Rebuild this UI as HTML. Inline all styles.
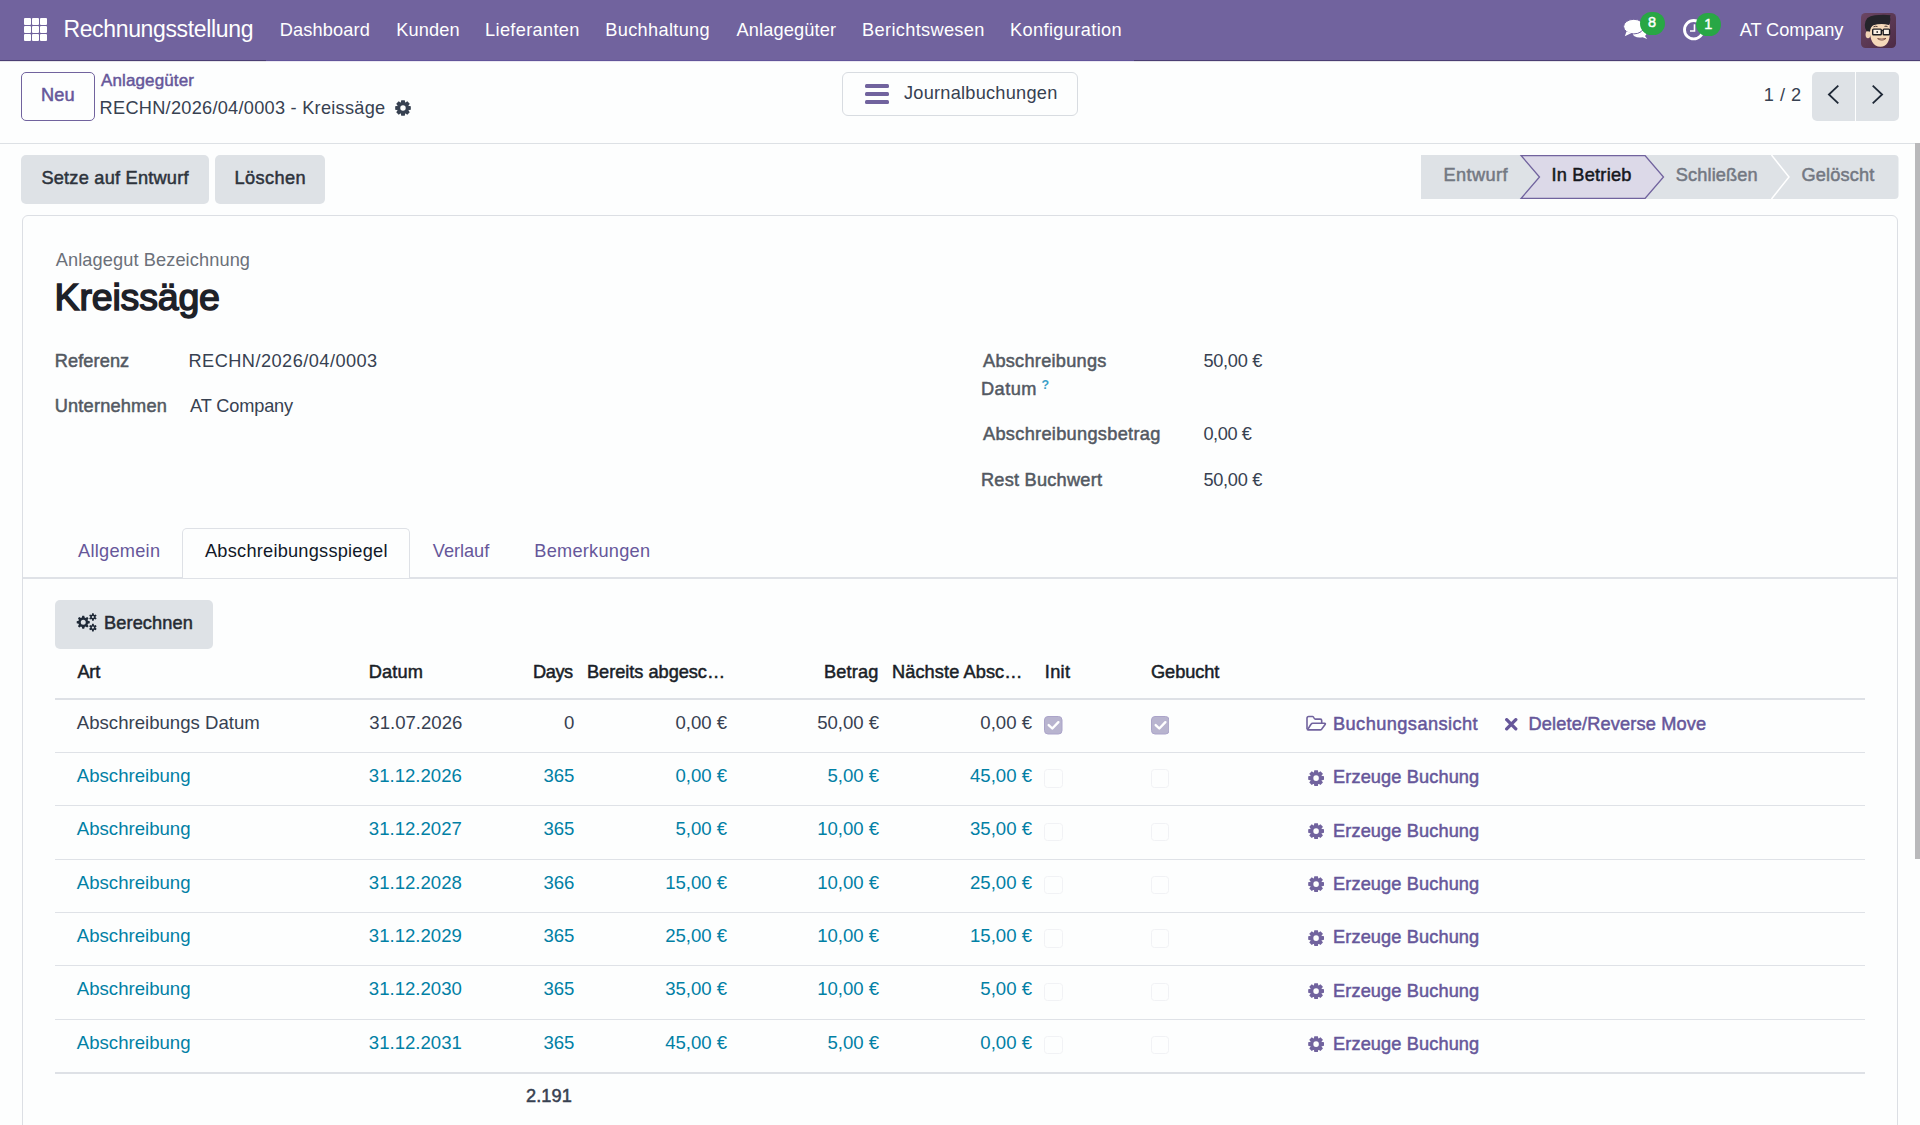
<!DOCTYPE html>
<html><head><meta charset="utf-8"><style>
html,body{margin:0;padding:0;width:1920px;height:1125px;overflow:hidden;background:#fdfefe;}
body{position:relative;font-family:"Liberation Sans", sans-serif;}
.t{position:absolute;white-space:nowrap;font-family:"Liberation Sans", sans-serif;}
.r{position:absolute;}
</style></head><body>
<div class="r" style="left:0px;top:0px;width:1920px;height:60px;background:#71639e;"></div>
<div class="r" style="left:0px;top:60px;width:1920px;height:1px;background:#4b3f73;"></div>
<div class="r" style="left:266px;top:60px;width:868px;height:1px;background:#62559a;"></div>
<div class="r" style="left:0px;top:61px;width:1920px;height:1px;background:#e6e5ea;"></div>
<div class="r" style="left:266px;top:61px;width:868px;height:1px;background:#ebe8f2;"></div>
<div class="r" style="left:24.0px;top:18.0px;width:6.6px;height:6.6px;background:#fff;border-radius:1px;"></div>
<div class="r" style="left:32.2px;top:18.0px;width:6.6px;height:6.6px;background:#fff;border-radius:1px;"></div>
<div class="r" style="left:40.4px;top:18.0px;width:6.6px;height:6.6px;background:#fff;border-radius:1px;"></div>
<div class="r" style="left:24.0px;top:26.2px;width:6.6px;height:6.6px;background:#fff;border-radius:1px;"></div>
<div class="r" style="left:32.2px;top:26.2px;width:6.6px;height:6.6px;background:#fff;border-radius:1px;"></div>
<div class="r" style="left:40.4px;top:26.2px;width:6.6px;height:6.6px;background:#fff;border-radius:1px;"></div>
<div class="r" style="left:24.0px;top:34.4px;width:6.6px;height:6.6px;background:#fff;border-radius:1px;"></div>
<div class="r" style="left:32.2px;top:34.4px;width:6.6px;height:6.6px;background:#fff;border-radius:1px;"></div>
<div class="r" style="left:40.4px;top:34.4px;width:6.6px;height:6.6px;background:#fff;border-radius:1px;"></div>
<div id="T1" class="t" style="left:63.40px;top:17.63px;font-size:23.0px;line-height:23.0px;font-weight:400;color:#fff;letter-spacing:-0.349px;">Rechnungsstellung</div>
<div id="T2" class="t" style="left:279.80px;top:20.79px;font-size:18.2px;line-height:18.2px;font-weight:400;color:#fff;letter-spacing:0.135px;">Dashboard</div>
<div id="T3" class="t" style="left:396.20px;top:20.79px;font-size:18.2px;line-height:18.2px;font-weight:400;color:#fff;letter-spacing:0.144px;">Kunden</div>
<div id="T4" class="t" style="left:485.10px;top:20.79px;font-size:18.2px;line-height:18.2px;font-weight:400;color:#fff;letter-spacing:0.324px;">Lieferanten</div>
<div id="T5" class="t" style="left:605.30px;top:20.79px;font-size:18.2px;line-height:18.2px;font-weight:400;color:#fff;letter-spacing:0.324px;">Buchhaltung</div>
<div id="T6" class="t" style="left:736.50px;top:20.79px;font-size:18.2px;line-height:18.2px;font-weight:400;color:#fff;letter-spacing:0.144px;">Anlagegüter</div>
<div id="T7" class="t" style="left:862.10px;top:20.79px;font-size:18.2px;line-height:18.2px;font-weight:400;color:#fff;letter-spacing:0.330px;">Berichtswesen</div>
<div id="T8" class="t" style="left:1010.00px;top:20.79px;font-size:18.2px;line-height:18.2px;font-weight:400;color:#fff;letter-spacing:0.375px;">Konfiguration</div>
<svg class="r" style="left:1623px;top:18px" width="26" height="22" viewBox="0 0 26 22"><path d="M9.5 14.5 Q10 12.5 14 12.5 Q21 12 23 14.5 Q24 16.5 22 18 L24.2 21 L19.5 19.2 Q15 20.3 11.5 18.3 Q9.5 17 9.5 14.5Z" fill="#fff"/><ellipse cx="10.8" cy="8.6" rx="10.2" ry="7.3" fill="#fff" stroke="#71639e" stroke-width="1"/><path d="M3.5 13.5 L1.8 18.2 L8.5 15 Z" fill="#fff"/></svg>
<div class="r" style="left:1639.5px;top:12px;width:25px;height:23px;border-radius:12px;background:#28a745;"></div>
<div class="t" style="left:1639.5px;width:25px;text-align:center;top:15.13px;font-size:14.5px;line-height:14.5px;font-weight:400;-webkit-text-stroke:0.45px #fff;color:#fff">8</div>
<svg class="r" style="left:1682px;top:18px" width="24" height="24" viewBox="0 0 24 24"><circle cx="11.7" cy="11.7" r="9.2" fill="none" stroke="#fff" stroke-width="2.9"/><path d="M12.5 6.3 V13 H8" fill="none" stroke="#fff" stroke-width="1.6"/></svg>
<div class="r" style="left:1695.5px;top:13px;width:25.5px;height:22.5px;border-radius:12px;background:#28a745;"></div>
<div class="t" style="left:1695.5px;width:25.5px;text-align:center;top:16.63px;font-size:14.5px;line-height:14.5px;font-weight:400;-webkit-text-stroke:0.45px #fff;color:#fff">1</div>
<div id="T9" class="t" style="left:1739.80px;top:21.29px;font-size:18.2px;line-height:18.2px;font-weight:400;color:#fff;letter-spacing:-0.100px;">AT Company</div>
<svg class="r" style="left:1861px;top:13px" width="35" height="35" viewBox="0 0 35 35">
<defs><linearGradient id="ag" x1="0" y1="0" x2="1" y2="1"><stop offset="0" stop-color="#6b4663"/><stop offset="1" stop-color="#4c2b45"/></linearGradient></defs>
<rect width="35" height="35" rx="4.5" fill="url(#ag)"/>
<ellipse cx="7" cy="21.5" rx="2.4" ry="3.8" fill="#f1d3b5"/>
<path d="M8.6 13 Q8.2 33.8 19.5 33.8 Q28.9 33.2 28.9 19 L28.7 11.5 Q20 9 8.6 12 Z" fill="#f5d9ba"/>
<path d="M3.8 12 Q4 3 14 2.2 Q24 1.5 29.6 2.3 Q28.6 4 29.4 6.2 Q29.2 10 27.8 12 Q20 10 12.3 12.3 Q9.6 13.8 9 18.5 L5.6 18.2 Q3.6 15.5 3.8 12 Z" fill="#24242a"/>
<path d="M12.5 13.8 Q14.5 12.8 16.5 13.6 M23.5 13.4 Q25 12.8 26.5 13.6" stroke="#3a2a2a" stroke-width="0.9" fill="none"/>
<rect x="11.7" y="16.1" width="8.6" height="5.6" rx="0.8" fill="#fbf1e6" stroke="#1e1e22" stroke-width="1.4"/>
<rect x="22.2" y="16.1" width="6.4" height="5.6" rx="0.8" fill="#fbf1e6" stroke="#1e1e22" stroke-width="1.4"/>
<path d="M20.3 17.6 H22.2" stroke="#1e1e22" stroke-width="1.2"/>
<circle cx="16.2" cy="19" r="0.9" fill="#333"/>
<path d="M16.6 25.6 Q21 28.8 25 25.4 Q21 26.6 16.6 25.6Z" fill="#fff" stroke="#6b3a2e" stroke-width="0.8"/>
</svg>
<div class="r" style="left:0px;top:62px;width:1920px;height:81px;background:#fdfefe;"></div>
<div class="r" style="left:0px;top:143px;width:1920px;height:1px;background:#dde1e5;"></div>
<div class="r" style="left:21px;top:72px;width:74px;height:49px;border:1.3px solid #71639e;border-radius:5px;box-sizing:border-box;background:#fdfefe;"></div>
<div id="T10" class="t" style="left:41.00px;top:85.84px;font-size:18.2px;line-height:18.2px;font-weight:400;color:#66579a;-webkit-text-stroke:0.50px #66579a;letter-spacing:0.180px;">Neu</div>
<div id="T11" class="t" style="left:101.10px;top:72.41px;font-size:17.0px;line-height:17.0px;font-weight:400;color:#66579a;-webkit-text-stroke:0.47px #66579a;letter-spacing:0.108px;">Anlagegüter</div>
<div id="T12" class="t" style="left:99.60px;top:99.39px;font-size:18.2px;line-height:18.2px;font-weight:400;color:#374151;letter-spacing:0.261px;">RECHN/2026/04/0003 - Kreissäge</div>
<svg class="r" style="left:395px;top:100px" width="16" height="16" viewBox="0 0 16 16"><path fill="#374151" fill-rule="evenodd" d="M5.68 3.08 L6.25 0.19 L9.75 0.19 L10.32 3.08 L9.84 2.88 L12.29 1.24 L14.76 3.71 L13.12 6.16 L12.92 5.68 L15.81 6.25 L15.81 9.75 L12.92 10.32 L13.12 9.84 L14.76 12.29 L12.29 14.76 L9.84 13.12 L10.32 12.92 L9.75 15.81 L6.25 15.81 L5.68 12.92 L6.16 13.12 L3.71 14.76 L1.24 12.29 L2.88 9.84 L3.08 10.32 L0.19 9.75 L0.19 6.25 L3.08 5.68 L2.88 6.16 L1.24 3.71 L3.71 1.24 L6.16 2.88 Z M10.72 8.00 A2.72 2.72 0 1 0 5.28 8.00 A2.72 2.72 0 1 0 10.72 8.00 Z"/></svg>
<div class="r" style="left:842px;top:72px;width:236px;height:43.5px;border:1px solid #d8dce1;border-radius:6px;box-sizing:border-box;background:#fdfefe;"></div>
<div class="r" style="left:865px;top:84px;width:24px;height:3.8px;background:#71639e;border-radius:1.5px;"></div>
<div class="r" style="left:865px;top:92px;width:24px;height:3.8px;background:#71639e;border-radius:1.5px;"></div>
<div class="r" style="left:865px;top:100px;width:24px;height:3.8px;background:#71639e;border-radius:1.5px;"></div>
<div id="T13" class="t" style="left:904.00px;top:84.49px;font-size:18.2px;line-height:18.2px;font-weight:400;color:#374151;letter-spacing:0.240px;">Journalbuchungen</div>
<div id="T14" class="t" style="left:1763.70px;top:85.84px;font-size:18.2px;line-height:18.2px;font-weight:400;color:#374151;letter-spacing:0.540px;">1 / 2</div>
<div class="r" style="left:1812px;top:72px;width:42.6px;height:49px;background:#dee2e6;border-radius:5px 0 0 5px;"></div>
<div class="r" style="left:1856px;top:72px;width:42.8px;height:49px;background:#dee2e6;border-radius:0 5px 5px 0;"></div>
<svg class="r" style="left:1826px;top:84px" width="15" height="21" viewBox="0 0 15 21"><path d="M12.3 1.6 L2.9 10.5 L12.3 19.4" fill="none" stroke="#1f2937" stroke-width="1.8"/></svg>
<svg class="r" style="left:1870px;top:84px" width="15" height="21" viewBox="0 0 15 21"><path d="M2.7 1.6 L12.1 10.5 L2.7 19.4" fill="none" stroke="#1f2937" stroke-width="1.8"/></svg>
<div class="r" style="left:21.3px;top:155px;width:187.5px;height:48.7px;background:#dee2e6;border-radius:5px;"></div>
<div id="T15" class="t" style="left:41.40px;top:168.79px;font-size:18.2px;line-height:18.2px;font-weight:400;color:#2d333c;-webkit-text-stroke:0.50px #2d333c;letter-spacing:0.225px;">Setze auf Entwurf</div>
<div class="r" style="left:215px;top:155px;width:109.7px;height:48.7px;background:#dee2e6;border-radius:5px;"></div>
<div id="T16" class="t" style="left:234.60px;top:168.79px;font-size:18.2px;line-height:18.2px;font-weight:400;color:#2d333c;-webkit-text-stroke:0.50px #2d333c;letter-spacing:0.360px;">Löschen</div>
<svg class="r" style="left:1421px;top:155px" width="478" height="44" viewBox="0 0 478 44">
<path d="M0 0 H473.5 Q477.5 0 477.5 4 V40 Q477.5 44 473.5 44 H0 Z" fill="#dee2e6"/>
<path d="M100 0.5 H224 L242.5 22 L224 43.5 H100 L118.5 22 Z" fill="#dcd9e8" stroke="#71639e" stroke-width="1.3"/>
<path d="M350.5 0 L368 22 L350.5 44" fill="none" stroke="#fff" stroke-width="1.5"/>
</svg>
<div id="T17" class="t" style="left:1443.50px;top:165.89px;font-size:18.2px;line-height:18.2px;font-weight:400;color:#737882;-webkit-text-stroke:0.50px #737882;letter-spacing:0.390px;">Entwurf</div>
<div id="T18" class="t" style="left:1551.40px;top:165.89px;font-size:18.2px;line-height:18.2px;font-weight:400;color:#16181d;-webkit-text-stroke:0.50px #16181d;letter-spacing:0.240px;">In Betrieb</div>
<div id="T19" class="t" style="left:1675.80px;top:165.89px;font-size:18.2px;line-height:18.2px;font-weight:400;color:#737882;-webkit-text-stroke:0.50px #737882;letter-spacing:0.113px;">Schließen</div>
<div id="T20" class="t" style="left:1801.40px;top:165.89px;font-size:18.2px;line-height:18.2px;font-weight:400;color:#737882;-webkit-text-stroke:0.50px #737882;letter-spacing:0.180px;">Gelöscht</div>
<div class="r" style="left:21.8px;top:215px;width:1876.7px;height:985px;border:1.4px solid #dcdfe4;border-radius:6px;background:#fdfefe;box-sizing:border-box;"></div>
<div id="T21" class="t" style="left:55.70px;top:250.79px;font-size:18.2px;line-height:18.2px;font-weight:400;color:#6b7079;letter-spacing:0.108px;">Anlagegut Bezeichnung</div>
<div id="T22" class="t" style="left:54.60px;top:278.76px;font-size:37.5px;line-height:37.5px;font-weight:400;color:#1d2128;-webkit-text-stroke:1.50px #1d2128;letter-spacing:-0.180px;">Kreissäge</div>
<div id="T23" class="t" style="left:54.70px;top:352.29px;font-size:18.2px;line-height:18.2px;font-weight:400;color:#535962;-webkit-text-stroke:0.50px #535962;letter-spacing:0.103px;">Referenz</div>
<div id="T24" class="t" style="left:188.50px;top:352.29px;font-size:18.2px;line-height:18.2px;font-weight:400;color:#374151;letter-spacing:0.455px;">RECHN/2026/04/0003</div>
<div id="T25" class="t" style="left:54.70px;top:397.49px;font-size:18.2px;line-height:18.2px;font-weight:400;color:#535962;-webkit-text-stroke:0.50px #535962;letter-spacing:0.198px;">Unternehmen</div>
<div id="T26" class="t" style="left:190.00px;top:397.49px;font-size:18.2px;line-height:18.2px;font-weight:400;color:#374151;letter-spacing:-0.140px;">AT Company</div>
<div id="T27" class="t" style="left:983.00px;top:352.09px;font-size:18.2px;line-height:18.2px;font-weight:400;color:#535962;-webkit-text-stroke:0.50px #535962;letter-spacing:0.255px;">Abschreibungs</div>
<div id="T28" class="t" style="left:981.00px;top:380.39px;font-size:18.2px;line-height:18.2px;font-weight:400;color:#535962;-webkit-text-stroke:0.50px #535962;letter-spacing:0.450px;">Datum</div>
<div class="t" style="left:1041.5px;top:378.92px;font-size:12.5px;line-height:12.5px;font-weight:700;color:#3a9fc8">?</div>
<div id="T29" class="t" style="left:1203.40px;top:352.09px;font-size:18.2px;line-height:18.2px;font-weight:400;color:#374151;letter-spacing:-0.270px;">50,00 €</div>
<div id="T30" class="t" style="left:983.00px;top:425.39px;font-size:18.2px;line-height:18.2px;font-weight:400;color:#535962;-webkit-text-stroke:0.50px #535962;letter-spacing:0.300px;">Abschreibungsbetrag</div>
<div id="T31" class="t" style="left:1203.40px;top:425.39px;font-size:18.2px;line-height:18.2px;font-weight:400;color:#374151;letter-spacing:-0.432px;">0,00 €</div>
<div id="T32" class="t" style="left:981.00px;top:470.89px;font-size:18.2px;line-height:18.2px;font-weight:400;color:#535962;-webkit-text-stroke:0.50px #535962;letter-spacing:0.225px;">Rest Buchwert</div>
<div id="T33" class="t" style="left:1203.40px;top:470.89px;font-size:18.2px;line-height:18.2px;font-weight:400;color:#374151;letter-spacing:-0.270px;">50,00 €</div>
<div class="r" style="left:22.8px;top:577.2px;width:1874.7px;height:1.5px;background:#dfe2e7;"></div>
<div class="r" style="left:181.7px;top:527.5px;width:228.5px;height:50.8px;border:1.2px solid #dee1e6;border-bottom:none;border-radius:5px 5px 0 0;background:#fdfefe;box-sizing:border-box;"></div>
<div id="T34" class="t" style="left:78.00px;top:542.09px;font-size:18.2px;line-height:18.2px;font-weight:400;color:#66579a;letter-spacing:0.270px;">Allgemein</div>
<div id="T35" class="t" style="left:205.00px;top:542.09px;font-size:18.2px;line-height:18.2px;font-weight:400;color:#111827;letter-spacing:0.237px;">Abschreibungsspiegel</div>
<div id="T36" class="t" style="left:432.80px;top:542.09px;font-size:18.2px;line-height:18.2px;font-weight:400;color:#66579a;letter-spacing:-0.030px;">Verlauf</div>
<div id="T37" class="t" style="left:534.30px;top:542.09px;font-size:18.2px;line-height:18.2px;font-weight:400;color:#66579a;letter-spacing:0.252px;">Bemerkungen</div>
<div class="r" style="left:55px;top:600px;width:158px;height:48.75px;background:#dee2e6;border-radius:5px;"></div>
<svg class="r" style="left:72px;top:608px" width="30" height="28" viewBox="0 0 30 28"><path fill="#1f2937" fill-rule="evenodd" d="M9.82 9.61 L10.30 7.77 L12.20 7.77 L12.68 9.61 L13.55 9.98 L15.20 9.01 L16.54 10.35 L15.57 12.00 L15.94 12.87 L17.78 13.35 L17.78 15.25 L15.94 15.73 L15.57 16.60 L16.54 18.25 L15.20 19.59 L13.55 18.62 L12.68 18.99 L12.20 20.83 L10.30 20.83 L9.82 18.99 L8.95 18.62 L7.30 19.59 L5.96 18.25 L6.93 16.60 L6.56 15.73 L4.72 15.25 L4.72 13.35 L6.56 12.87 L6.93 12.00 L5.96 10.35 L7.30 9.01 L8.95 9.98 Z M13.75 14.30 A2.5 2.5 0 1 0 8.75 14.30 A2.5 2.5 0 1 0 13.75 14.30 Z"/><path fill="#1f2937" fill-rule="evenodd" d="M19.83 6.63 L20.11 5.18 L21.69 5.18 L21.97 6.63 L22.42 6.89 L23.81 6.40 L24.60 7.78 L23.49 8.74 L23.49 9.26 L24.60 10.22 L23.81 11.60 L22.42 11.11 L21.97 11.37 L21.69 12.82 L20.11 12.82 L19.83 11.37 L19.38 11.11 L17.99 11.60 L17.20 10.22 L18.31 9.26 L18.31 8.74 L17.20 7.78 L17.99 6.40 L19.38 6.89 Z M22.00 9.00 A1.1 1.1 0 1 0 19.80 9.00 A1.1 1.1 0 1 0 22.00 9.00 Z"/><path fill="#1f2937" fill-rule="evenodd" d="M19.83 17.23 L20.11 15.78 L21.69 15.78 L21.97 17.23 L22.42 17.49 L23.81 17.00 L24.60 18.38 L23.49 19.34 L23.49 19.86 L24.60 20.82 L23.81 22.20 L22.42 21.71 L21.97 21.97 L21.69 23.42 L20.11 23.42 L19.83 21.97 L19.38 21.71 L17.99 22.20 L17.20 20.82 L18.31 19.86 L18.31 19.34 L17.20 18.38 L17.99 17.00 L19.38 17.49 Z M22.00 19.60 A1.1 1.1 0 1 0 19.80 19.60 A1.1 1.1 0 1 0 22.00 19.60 Z"/></svg>
<div id="T38" class="t" style="left:104.00px;top:613.79px;font-size:18.2px;line-height:18.2px;font-weight:400;color:#262b33;-webkit-text-stroke:0.50px #262b33;letter-spacing:0.113px;">Berechnen</div>
<div id="T39" class="t" style="left:77.40px;top:662.89px;font-size:18.2px;line-height:18.2px;font-weight:400;color:#1a1f28;-webkit-text-stroke:0.50px #1a1f28;letter-spacing:-0.180px;">Art</div>
<div id="T40" class="t" style="left:368.70px;top:662.89px;font-size:18.2px;line-height:18.2px;font-weight:400;color:#1a1f28;-webkit-text-stroke:0.50px #1a1f28;letter-spacing:0.180px;">Datum</div>
<div id="T41" class="t" style="left:533.00px;top:662.89px;font-size:18.2px;line-height:18.2px;font-weight:400;color:#1a1f28;-webkit-text-stroke:0.50px #1a1f28;letter-spacing:-0.420px;">Days</div>
<div id="T42" class="t" style="left:587.00px;top:662.89px;font-size:18.2px;line-height:18.2px;font-weight:400;color:#1a1f28;-webkit-text-stroke:0.50px #1a1f28;letter-spacing:-0.026px;">Bereits abgesc…</div>
<div id="T43" class="t" style="left:824.00px;top:662.89px;font-size:18.2px;line-height:18.2px;font-weight:400;color:#1a1f28;-webkit-text-stroke:0.50px #1a1f28;letter-spacing:0.180px;">Betrag</div>
<div id="T44" class="t" style="left:892.00px;top:662.89px;font-size:18.2px;line-height:18.2px;font-weight:400;color:#1a1f28;-webkit-text-stroke:0.50px #1a1f28;letter-spacing:0.090px;">Nächste Absc…</div>
<div id="T45" class="t" style="left:1044.80px;top:662.89px;font-size:18.2px;line-height:18.2px;font-weight:400;color:#1a1f28;-webkit-text-stroke:0.50px #1a1f28;letter-spacing:0.300px;">Init</div>
<div id="T46" class="t" style="left:1151.00px;top:662.89px;font-size:18.2px;line-height:18.2px;font-weight:400;color:#1a1f28;-webkit-text-stroke:0.50px #1a1f28;letter-spacing:-0.060px;">Gebucht</div>
<div class="r" style="left:55px;top:698px;width:1810px;height:1.6px;background:#dee1e6;"></div>
<div id="T47" class="t" style="left:76.80px;top:713.76px;font-size:18.6px;line-height:18.6px;font-weight:400;color:#374151;">Abschreibungs Datum</div>
<div id="T48" class="t" style="left:369.30px;top:713.76px;font-size:18.6px;line-height:18.6px;font-weight:400;color:#374151;">31.07.2026</div>
<div class="t" style="right:1345.60px;top:713.76px;font-size:18.6px;line-height:18.6px;color:#374151">0</div>
<div class="t" style="right:1192.80px;top:713.76px;font-size:18.6px;line-height:18.6px;color:#374151">0,00 €</div>
<div class="t" style="right:1040.80px;top:713.76px;font-size:18.6px;line-height:18.6px;color:#374151">50,00 €</div>
<div class="t" style="right:888.00px;top:713.76px;font-size:18.6px;line-height:18.6px;color:#374151">0,00 €</div>
<svg class="r" style="left:1044.1px;top:716.00px" width="18.5" height="18.5" viewBox="0 0 18.5 18.5"><rect x="0.5" y="0.5" width="17.5" height="17.5" rx="3.5" fill="#b8b4cf" stroke="#aba4c9" stroke-width="1"/><path d="M4.7 9.1 L8.3 12.5 L14.4 6.2" fill="none" stroke="#fff" stroke-width="2.4" stroke-linecap="round" stroke-linejoin="round"/></svg>
<svg class="r" style="left:1150.6px;top:716.00px" width="18.5" height="18.5" viewBox="0 0 18.5 18.5"><rect x="0.5" y="0.5" width="17.5" height="17.5" rx="3.5" fill="#b8b4cf" stroke="#aba4c9" stroke-width="1"/><path d="M4.7 9.1 L8.3 12.5 L14.4 6.2" fill="none" stroke="#fff" stroke-width="2.4" stroke-linecap="round" stroke-linejoin="round"/></svg>
<svg class="r" style="left:1300px;top:710.00px" width="32" height="26" viewBox="0 0 32 26"><g fill="none" stroke="#71639e" stroke-width="1.6" stroke-linejoin="round"><path d="M7 19.3 V8.2 Q7 6.5 8.7 6.5 H12.6 Q13.4 6.5 13.8 7.5 L14.3 8.5 Q14.6 9.1 15.3 9.1 H20.2 Q21.7 9.1 21.7 10.6 V13.3"/><path d="M7.6 19.6 L11 14.3 Q11.6 13.3 12.8 13.3 H24.5 Q25.9 13.4 25.1 14.6 L21.6 19.3 Q21.1 19.9 20.3 19.9 H8.3 Q7.2 19.9 7.6 19.6 Z"/></g></svg>
<div id="T49" class="t" style="left:1333.00px;top:714.89px;font-size:18.2px;line-height:18.2px;font-weight:400;color:#66579a;-webkit-text-stroke:0.50px #66579a;letter-spacing:0.437px;">Buchungsansicht</div>
<svg class="r" style="left:1505px;top:718.10px" width="12.5" height="12.5" viewBox="0 0 12.5 12.5"><path d="M1.7 1.7 L10.8 10.8 M10.8 1.7 L1.7 10.8" stroke="#66579a" stroke-width="3.3" stroke-linecap="round"/></svg>
<div id="T50" class="t" style="left:1528.50px;top:714.89px;font-size:18.2px;line-height:18.2px;font-weight:400;color:#66579a;-webkit-text-stroke:0.50px #66579a;letter-spacing:0.150px;">Delete/Reverse Move</div>
<div class="r" style="left:55px;top:752px;width:1810px;height:1px;background:#dfe2e7;"></div>
<div id="T51" class="t" style="left:76.80px;top:767.09px;font-size:18.6px;line-height:18.6px;font-weight:400;color:#0180a5;">Abschreibung</div>
<div id="T52" class="t" style="left:368.80px;top:767.09px;font-size:18.6px;line-height:18.6px;font-weight:400;color:#0180a5;">31.12.2026</div>
<div class="t" style="right:1345.60px;top:767.09px;font-size:18.6px;line-height:18.6px;color:#0180a5">365</div>
<div class="t" style="right:1192.80px;top:767.09px;font-size:18.6px;line-height:18.6px;color:#0180a5">0,00 €</div>
<div class="t" style="right:1040.80px;top:767.09px;font-size:18.6px;line-height:18.6px;color:#0180a5">5,00 €</div>
<div class="t" style="right:888.00px;top:767.09px;font-size:18.6px;line-height:18.6px;color:#0180a5">45,00 €</div>
<div class="r" style="left:1044px;top:769.33px;width:18.5px;height:18.5px;border:1px solid #f1f2f5;border-radius:3.5px;box-sizing:border-box;"></div>
<div class="r" style="left:1150.6px;top:769.33px;width:18.5px;height:18.5px;border:1px solid #f1f2f5;border-radius:3.5px;box-sizing:border-box;"></div>
<svg class="r" style="left:1308.3px;top:769.53px" width="16.2" height="16.2" viewBox="0 0 16.2 16.2"><path fill="#71639e" fill-rule="evenodd" d="M5.75 3.12 L6.33 0.20 L9.87 0.20 L10.45 3.12 L9.96 2.92 L12.44 1.26 L14.94 3.76 L13.28 6.24 L13.08 5.75 L16.00 6.33 L16.00 9.87 L13.08 10.45 L13.28 9.96 L14.94 12.44 L12.44 14.94 L9.96 13.28 L10.45 13.08 L9.87 16.00 L6.33 16.00 L5.75 13.08 L6.24 13.28 L3.76 14.94 L1.26 12.44 L2.92 9.96 L3.12 10.45 L0.20 9.87 L0.20 6.33 L3.12 5.75 L2.92 6.24 L1.26 3.76 L3.76 1.26 L6.24 2.92 Z M10.85 8.10 A2.754 2.754 0 1 0 5.35 8.10 A2.754 2.754 0 1 0 10.85 8.10 Z"/></svg>
<div id="T53" class="t" style="left:1333.00px;top:768.22px;font-size:18.2px;line-height:18.2px;font-weight:400;color:#66579a;-webkit-text-stroke:0.50px #66579a;letter-spacing:0.116px;">Erzeuge Buchung</div>
<div class="r" style="left:55px;top:805px;width:1810px;height:1px;background:#dfe2e7;"></div>
<div id="T54" class="t" style="left:76.80px;top:820.42px;font-size:18.6px;line-height:18.6px;font-weight:400;color:#0180a5;">Abschreibung</div>
<div id="T55" class="t" style="left:368.80px;top:820.42px;font-size:18.6px;line-height:18.6px;font-weight:400;color:#0180a5;">31.12.2027</div>
<div class="t" style="right:1345.60px;top:820.42px;font-size:18.6px;line-height:18.6px;color:#0180a5">365</div>
<div class="t" style="right:1192.80px;top:820.42px;font-size:18.6px;line-height:18.6px;color:#0180a5">5,00 €</div>
<div class="t" style="right:1040.80px;top:820.42px;font-size:18.6px;line-height:18.6px;color:#0180a5">10,00 €</div>
<div class="t" style="right:888.00px;top:820.42px;font-size:18.6px;line-height:18.6px;color:#0180a5">35,00 €</div>
<div class="r" style="left:1044px;top:822.66px;width:18.5px;height:18.5px;border:1px solid #f1f2f5;border-radius:3.5px;box-sizing:border-box;"></div>
<div class="r" style="left:1150.6px;top:822.66px;width:18.5px;height:18.5px;border:1px solid #f1f2f5;border-radius:3.5px;box-sizing:border-box;"></div>
<svg class="r" style="left:1308.3px;top:822.86px" width="16.2" height="16.2" viewBox="0 0 16.2 16.2"><path fill="#71639e" fill-rule="evenodd" d="M5.75 3.12 L6.33 0.20 L9.87 0.20 L10.45 3.12 L9.96 2.92 L12.44 1.26 L14.94 3.76 L13.28 6.24 L13.08 5.75 L16.00 6.33 L16.00 9.87 L13.08 10.45 L13.28 9.96 L14.94 12.44 L12.44 14.94 L9.96 13.28 L10.45 13.08 L9.87 16.00 L6.33 16.00 L5.75 13.08 L6.24 13.28 L3.76 14.94 L1.26 12.44 L2.92 9.96 L3.12 10.45 L0.20 9.87 L0.20 6.33 L3.12 5.75 L2.92 6.24 L1.26 3.76 L3.76 1.26 L6.24 2.92 Z M10.85 8.10 A2.754 2.754 0 1 0 5.35 8.10 A2.754 2.754 0 1 0 10.85 8.10 Z"/></svg>
<div id="T56" class="t" style="left:1333.00px;top:821.55px;font-size:18.2px;line-height:18.2px;font-weight:400;color:#66579a;-webkit-text-stroke:0.50px #66579a;letter-spacing:0.116px;">Erzeuge Buchung</div>
<div class="r" style="left:55px;top:859px;width:1810px;height:1px;background:#dfe2e7;"></div>
<div id="T57" class="t" style="left:76.80px;top:873.75px;font-size:18.6px;line-height:18.6px;font-weight:400;color:#0180a5;">Abschreibung</div>
<div id="T58" class="t" style="left:368.80px;top:873.75px;font-size:18.6px;line-height:18.6px;font-weight:400;color:#0180a5;">31.12.2028</div>
<div class="t" style="right:1345.60px;top:873.75px;font-size:18.6px;line-height:18.6px;color:#0180a5">366</div>
<div class="t" style="right:1192.80px;top:873.75px;font-size:18.6px;line-height:18.6px;color:#0180a5">15,00 €</div>
<div class="t" style="right:1040.80px;top:873.75px;font-size:18.6px;line-height:18.6px;color:#0180a5">10,00 €</div>
<div class="t" style="right:888.00px;top:873.75px;font-size:18.6px;line-height:18.6px;color:#0180a5">25,00 €</div>
<div class="r" style="left:1044px;top:875.99px;width:18.5px;height:18.5px;border:1px solid #f1f2f5;border-radius:3.5px;box-sizing:border-box;"></div>
<div class="r" style="left:1150.6px;top:875.99px;width:18.5px;height:18.5px;border:1px solid #f1f2f5;border-radius:3.5px;box-sizing:border-box;"></div>
<svg class="r" style="left:1308.3px;top:876.19px" width="16.2" height="16.2" viewBox="0 0 16.2 16.2"><path fill="#71639e" fill-rule="evenodd" d="M5.75 3.12 L6.33 0.20 L9.87 0.20 L10.45 3.12 L9.96 2.92 L12.44 1.26 L14.94 3.76 L13.28 6.24 L13.08 5.75 L16.00 6.33 L16.00 9.87 L13.08 10.45 L13.28 9.96 L14.94 12.44 L12.44 14.94 L9.96 13.28 L10.45 13.08 L9.87 16.00 L6.33 16.00 L5.75 13.08 L6.24 13.28 L3.76 14.94 L1.26 12.44 L2.92 9.96 L3.12 10.45 L0.20 9.87 L0.20 6.33 L3.12 5.75 L2.92 6.24 L1.26 3.76 L3.76 1.26 L6.24 2.92 Z M10.85 8.10 A2.754 2.754 0 1 0 5.35 8.10 A2.754 2.754 0 1 0 10.85 8.10 Z"/></svg>
<div id="T59" class="t" style="left:1333.00px;top:874.88px;font-size:18.2px;line-height:18.2px;font-weight:400;color:#66579a;-webkit-text-stroke:0.50px #66579a;letter-spacing:0.116px;">Erzeuge Buchung</div>
<div class="r" style="left:55px;top:912px;width:1810px;height:1px;background:#dfe2e7;"></div>
<div id="T60" class="t" style="left:76.80px;top:927.08px;font-size:18.6px;line-height:18.6px;font-weight:400;color:#0180a5;">Abschreibung</div>
<div id="T61" class="t" style="left:368.80px;top:927.08px;font-size:18.6px;line-height:18.6px;font-weight:400;color:#0180a5;">31.12.2029</div>
<div class="t" style="right:1345.60px;top:927.08px;font-size:18.6px;line-height:18.6px;color:#0180a5">365</div>
<div class="t" style="right:1192.80px;top:927.08px;font-size:18.6px;line-height:18.6px;color:#0180a5">25,00 €</div>
<div class="t" style="right:1040.80px;top:927.08px;font-size:18.6px;line-height:18.6px;color:#0180a5">10,00 €</div>
<div class="t" style="right:888.00px;top:927.08px;font-size:18.6px;line-height:18.6px;color:#0180a5">15,00 €</div>
<div class="r" style="left:1044px;top:929.32px;width:18.5px;height:18.5px;border:1px solid #f1f2f5;border-radius:3.5px;box-sizing:border-box;"></div>
<div class="r" style="left:1150.6px;top:929.32px;width:18.5px;height:18.5px;border:1px solid #f1f2f5;border-radius:3.5px;box-sizing:border-box;"></div>
<svg class="r" style="left:1308.3px;top:929.52px" width="16.2" height="16.2" viewBox="0 0 16.2 16.2"><path fill="#71639e" fill-rule="evenodd" d="M5.75 3.12 L6.33 0.20 L9.87 0.20 L10.45 3.12 L9.96 2.92 L12.44 1.26 L14.94 3.76 L13.28 6.24 L13.08 5.75 L16.00 6.33 L16.00 9.87 L13.08 10.45 L13.28 9.96 L14.94 12.44 L12.44 14.94 L9.96 13.28 L10.45 13.08 L9.87 16.00 L6.33 16.00 L5.75 13.08 L6.24 13.28 L3.76 14.94 L1.26 12.44 L2.92 9.96 L3.12 10.45 L0.20 9.87 L0.20 6.33 L3.12 5.75 L2.92 6.24 L1.26 3.76 L3.76 1.26 L6.24 2.92 Z M10.85 8.10 A2.754 2.754 0 1 0 5.35 8.10 A2.754 2.754 0 1 0 10.85 8.10 Z"/></svg>
<div id="T62" class="t" style="left:1333.00px;top:928.21px;font-size:18.2px;line-height:18.2px;font-weight:400;color:#66579a;-webkit-text-stroke:0.50px #66579a;letter-spacing:0.116px;">Erzeuge Buchung</div>
<div class="r" style="left:55px;top:965px;width:1810px;height:1px;background:#dfe2e7;"></div>
<div id="T63" class="t" style="left:76.80px;top:980.41px;font-size:18.6px;line-height:18.6px;font-weight:400;color:#0180a5;">Abschreibung</div>
<div id="T64" class="t" style="left:368.80px;top:980.41px;font-size:18.6px;line-height:18.6px;font-weight:400;color:#0180a5;">31.12.2030</div>
<div class="t" style="right:1345.60px;top:980.41px;font-size:18.6px;line-height:18.6px;color:#0180a5">365</div>
<div class="t" style="right:1192.80px;top:980.41px;font-size:18.6px;line-height:18.6px;color:#0180a5">35,00 €</div>
<div class="t" style="right:1040.80px;top:980.41px;font-size:18.6px;line-height:18.6px;color:#0180a5">10,00 €</div>
<div class="t" style="right:888.00px;top:980.41px;font-size:18.6px;line-height:18.6px;color:#0180a5">5,00 €</div>
<div class="r" style="left:1044px;top:982.65px;width:18.5px;height:18.5px;border:1px solid #f1f2f5;border-radius:3.5px;box-sizing:border-box;"></div>
<div class="r" style="left:1150.6px;top:982.65px;width:18.5px;height:18.5px;border:1px solid #f1f2f5;border-radius:3.5px;box-sizing:border-box;"></div>
<svg class="r" style="left:1308.3px;top:982.85px" width="16.2" height="16.2" viewBox="0 0 16.2 16.2"><path fill="#71639e" fill-rule="evenodd" d="M5.75 3.12 L6.33 0.20 L9.87 0.20 L10.45 3.12 L9.96 2.92 L12.44 1.26 L14.94 3.76 L13.28 6.24 L13.08 5.75 L16.00 6.33 L16.00 9.87 L13.08 10.45 L13.28 9.96 L14.94 12.44 L12.44 14.94 L9.96 13.28 L10.45 13.08 L9.87 16.00 L6.33 16.00 L5.75 13.08 L6.24 13.28 L3.76 14.94 L1.26 12.44 L2.92 9.96 L3.12 10.45 L0.20 9.87 L0.20 6.33 L3.12 5.75 L2.92 6.24 L1.26 3.76 L3.76 1.26 L6.24 2.92 Z M10.85 8.10 A2.754 2.754 0 1 0 5.35 8.10 A2.754 2.754 0 1 0 10.85 8.10 Z"/></svg>
<div id="T65" class="t" style="left:1333.00px;top:981.54px;font-size:18.2px;line-height:18.2px;font-weight:400;color:#66579a;-webkit-text-stroke:0.50px #66579a;letter-spacing:0.116px;">Erzeuge Buchung</div>
<div class="r" style="left:55px;top:1019px;width:1810px;height:1px;background:#dfe2e7;"></div>
<div id="T66" class="t" style="left:76.80px;top:1033.74px;font-size:18.6px;line-height:18.6px;font-weight:400;color:#0180a5;">Abschreibung</div>
<div id="T67" class="t" style="left:368.80px;top:1033.74px;font-size:18.6px;line-height:18.6px;font-weight:400;color:#0180a5;">31.12.2031</div>
<div class="t" style="right:1345.60px;top:1033.74px;font-size:18.6px;line-height:18.6px;color:#0180a5">365</div>
<div class="t" style="right:1192.80px;top:1033.74px;font-size:18.6px;line-height:18.6px;color:#0180a5">45,00 €</div>
<div class="t" style="right:1040.80px;top:1033.74px;font-size:18.6px;line-height:18.6px;color:#0180a5">5,00 €</div>
<div class="t" style="right:888.00px;top:1033.74px;font-size:18.6px;line-height:18.6px;color:#0180a5">0,00 €</div>
<div class="r" style="left:1044px;top:1035.98px;width:18.5px;height:18.5px;border:1px solid #f1f2f5;border-radius:3.5px;box-sizing:border-box;"></div>
<div class="r" style="left:1150.6px;top:1035.98px;width:18.5px;height:18.5px;border:1px solid #f1f2f5;border-radius:3.5px;box-sizing:border-box;"></div>
<svg class="r" style="left:1308.3px;top:1036.18px" width="16.2" height="16.2" viewBox="0 0 16.2 16.2"><path fill="#71639e" fill-rule="evenodd" d="M5.75 3.12 L6.33 0.20 L9.87 0.20 L10.45 3.12 L9.96 2.92 L12.44 1.26 L14.94 3.76 L13.28 6.24 L13.08 5.75 L16.00 6.33 L16.00 9.87 L13.08 10.45 L13.28 9.96 L14.94 12.44 L12.44 14.94 L9.96 13.28 L10.45 13.08 L9.87 16.00 L6.33 16.00 L5.75 13.08 L6.24 13.28 L3.76 14.94 L1.26 12.44 L2.92 9.96 L3.12 10.45 L0.20 9.87 L0.20 6.33 L3.12 5.75 L2.92 6.24 L1.26 3.76 L3.76 1.26 L6.24 2.92 Z M10.85 8.10 A2.754 2.754 0 1 0 5.35 8.10 A2.754 2.754 0 1 0 10.85 8.10 Z"/></svg>
<div id="T68" class="t" style="left:1333.00px;top:1034.87px;font-size:18.2px;line-height:18.2px;font-weight:400;color:#66579a;-webkit-text-stroke:0.50px #66579a;letter-spacing:0.116px;">Erzeuge Buchung</div>
<div class="r" style="left:55px;top:1072px;width:1810px;height:2px;background:#dee1e6;"></div>
<div id="T69" class="t" style="left:526.00px;top:1086.59px;font-size:18.2px;line-height:18.2px;font-weight:400;color:#374151;-webkit-text-stroke:0.50px #374151;letter-spacing:0.090px;">2.191</div>
<div class="r" style="left:1915px;top:143px;width:5px;height:716px;background:#b9b9bb;"></div>
</body></html>
